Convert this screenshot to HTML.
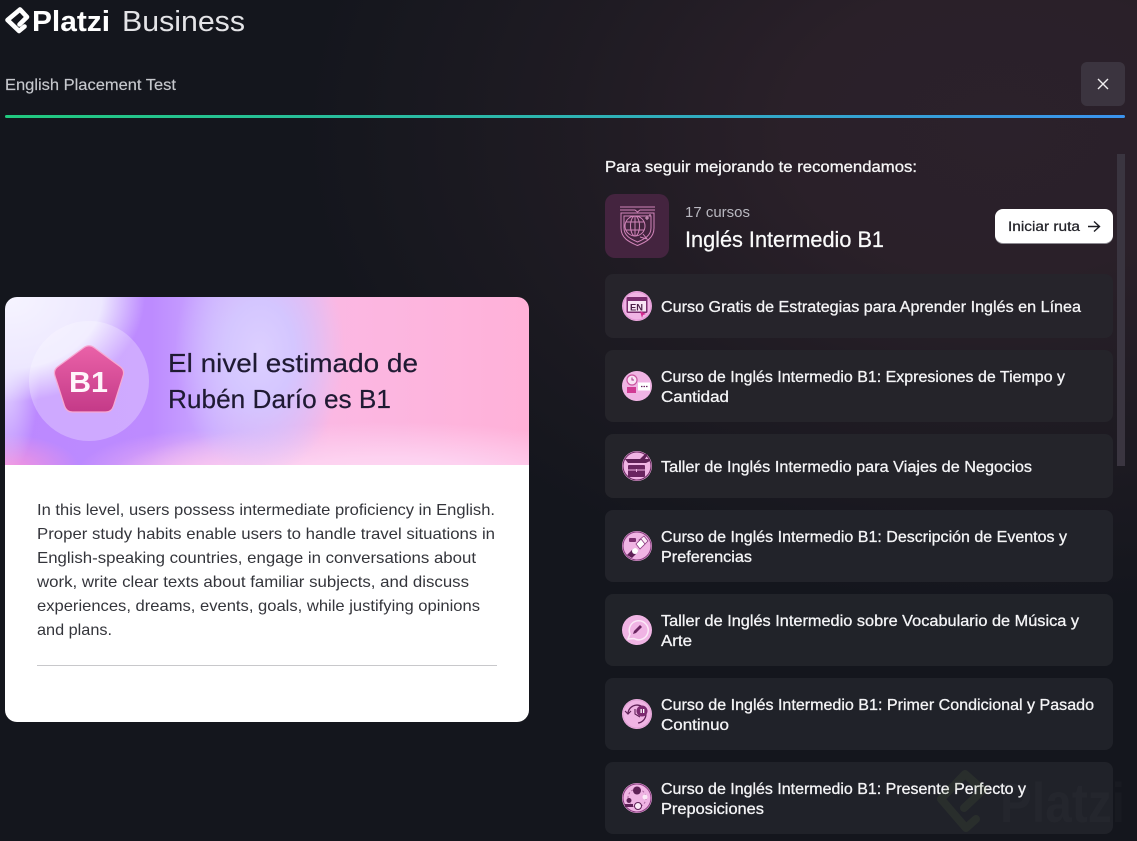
<!DOCTYPE html>
<html lang="es"><head><meta charset="utf-8"><title>English Placement Test</title>
<style>
html,body{margin:0;padding:0;width:1137px;height:841px;overflow:hidden;background:#14161d}
#bg{position:absolute;inset:0;background:radial-gradient(ellipse 700px 480px at 1000px 130px,#2b212b 0%,#2a2029 30%,rgba(35,29,37,.75) 60%,rgba(20,22,29,0) 100%),#14161d}
.b{position:absolute;box-sizing:border-box}
.c{left:605px;width:508px;border-radius:8px;background:#23242a}
#hd{left:5px;top:297px;width:524px;height:168px;border-radius:12px 12px 0 0;overflow:hidden;background:
radial-gradient(ellipse 135px 105px at 5px 0px,#f6f4ff 0%,#ede8ff 68%,rgba(237,232,255,0) 100%),
radial-gradient(ellipse 35px 110px at 0px 70px,#e6dcff 0%,rgba(230,220,255,0) 100%),
radial-gradient(ellipse 75px 35px at 0px 172px,#f895dc 0%,rgba(248,149,220,0) 100%),
radial-gradient(ellipse 85px 125px at 255px 55px,#dccfff 0%,#d4c6ff 40%,rgba(212,198,255,0) 100%),
radial-gradient(ellipse 280px 60px at 380px 185px,#fedaf3 0%,#fdd2f0 40%,rgba(253,210,240,0) 100%),
radial-gradient(ellipse 130px 45px at 200px 178px,#f6b8ee 0%,rgba(246,184,238,0) 100%),
linear-gradient(90deg,#bb88ff 0%,#bd8bff 28%,#cba9ff 40%,#fbb8e3 62%,#ffb1d8 100%)}
#card{left:5px;top:465px;width:524px;height:257px;background:#fff;border-radius:0 0 12px 12px}
svg{position:absolute;left:0;top:0}
text{font-family:"Liberation Sans",sans-serif}
.l{font-size:16px;fill:#f4f4f6;stroke:#f4f4f6;stroke-width:.3}
.p{font-size:16px;fill:#34353b}
.h{font-size:26px;fill:#1f1a33;stroke:#1f1a33;stroke-width:.2}
</style></head><body>
<div id="bg"></div>
<div class="b" style="left:5px;top:115px;width:1120px;height:3px;border-radius:2px;background:linear-gradient(90deg,#21c97f 0%,#2bb9a8 42%,#3b93ee 100%)"></div>
<div class="b" style="left:1081px;top:62px;width:44px;height:44px;border-radius:6px;background:#3b343f"></div>
<div class="b" style="left:1117px;top:154px;width:8px;height:312px;background:#3a3540"></div>
<div class="b" style="left:605px;top:194px;width:64px;height:64px;border-radius:10px;background:#44243f"></div>
<div class="b" style="left:995px;top:209px;width:118px;height:34px;border-radius:8px;background:#fff;box-shadow:0 1px 0 #8d8b92"></div>
<div class="b c" style="top:274px;height:64px;background:#26242b"></div>
<div class="b c" style="top:350px;height:72px;background:#25242a"></div>
<div class="b c" style="top:434px;height:64px;background:#24242a"></div>
<div class="b c" style="top:510px;height:72px;background:#22232a"></div>
<div class="b c" style="top:594px;height:72px;background:#212329"></div>
<div class="b c" style="top:678px;height:72px;background:#202229"></div>
<div class="b c" style="top:762px;height:72px;background:#202229"></div>
<div class="b" id="hd"></div>
<div class="b" id="card"></div>
<div class="b" style="left:37px;top:665px;width:460px;height:1px;background:#c8c8cb"></div>

<svg width="1137" height="841" viewBox="0 0 1137 841" xmlns="http://www.w3.org/2000/svg">
<!-- logo -->
<path d="M19.500 24.500 L27 17 L20 9.500 L7.500 20 L19 31 L24.500 26.500" fill="none" stroke="#fff" stroke-width="4.600" stroke-linejoin="round" stroke-linecap="round"/>
<text x="32" y="31" font-size="29" font-weight="700" fill="#fff" textLength="78" lengthAdjust="spacingAndGlyphs">Platzi</text>
<text x="122" y="31" font-size="29" fill="#e4e4e7" textLength="123" lengthAdjust="spacingAndGlyphs">Business</text>
<text x="5" y="90" font-size="16" fill="#c6c8cd" stroke="#c6c8cd" stroke-width=".15" textLength="171" lengthAdjust="spacingAndGlyphs">English Placement Test</text>
<path d="M1098 79 L1108 89 M1108 79 L1098 89" stroke="#f0eef0" stroke-width="1.400" fill="none"/>

<text x="605" y="172" font-size="16" fill="#f6f6f7" stroke="#f6f6f7" stroke-width=".3" textLength="312" lengthAdjust="spacingAndGlyphs">Para seguir mejorando te recomendamos:</text>
<text x="685" y="217" font-size="14.500" fill="#b9b8c0" textLength="65" lengthAdjust="spacingAndGlyphs">17 cursos</text>
<text x="685" y="247" font-size="22" fill="#fafafa" stroke="#fafafa" stroke-width=".25" textLength="199" lengthAdjust="spacingAndGlyphs">Inglés Intermedio B1</text>
<text x="1008" y="231" font-size="13.500" fill="#24242a" stroke="#24242a" stroke-width=".25" textLength="72" lengthAdjust="spacingAndGlyphs">Iniciar ruta</text>
<path d="M1088 226.500 H1099 M1094 221.500 L1099.500 226.500 L1094 231.500" stroke="#1c1c22" stroke-width="1.400" fill="none"/>

<!-- route icon -->
<g fill="none" stroke="#d084b8" stroke-width="1">
<path d="M620 207 H655 M620 210 H635 L637.500 212 L640 210 H655"/>
<path d="M621 213 H654 V228 C654 238 646 242 637.500 245.500 C629 242 621 238 621 228 Z"/>
<path d="M624 216 H651 V228 C651 236 644 239 637.500 242 C631 239 624 236 624 228 Z"/>
<circle cx="635" cy="226" r="10"/><ellipse cx="635" cy="226" rx="4.500" ry="10"/>
<path d="M625.500 222 H644.500 M625.500 230 H644.500 M635 216 V236"/>
<path d="M643 234 L647 239 L640 237"/>
<path d="M647 216 V220 M645 218 H649 M650 214 V216" stroke="#e0a4cc"/>
</g>

<!-- list text -->
<text class="l" x="661" y="312" textLength="420" lengthAdjust="spacingAndGlyphs">Curso Gratis de Estrategias para Aprender Inglés en Línea</text>
<text class="l" x="661" y="382" textLength="404" lengthAdjust="spacingAndGlyphs">Curso de Inglés Intermedio B1: Expresiones de Tiempo y</text>
<text class="l" x="661" y="402" textLength="68" lengthAdjust="spacingAndGlyphs">Cantidad</text>
<text class="l" x="661" y="472" textLength="371" lengthAdjust="spacingAndGlyphs">Taller de Inglés Intermedio para Viajes de Negocios</text>
<text class="l" x="661" y="542" textLength="406" lengthAdjust="spacingAndGlyphs">Curso de Inglés Intermedio B1: Descripción de Eventos y</text>
<text class="l" x="661" y="562" textLength="91" lengthAdjust="spacingAndGlyphs">Preferencias</text>
<text class="l" x="661" y="626" textLength="418" lengthAdjust="spacingAndGlyphs">Taller de Inglés Intermedio sobre Vocabulario de Música y</text>
<text class="l" x="661" y="646" textLength="31" lengthAdjust="spacingAndGlyphs">Arte</text>
<text class="l" x="661" y="710" textLength="433" lengthAdjust="spacingAndGlyphs">Curso de Inglés Intermedio B1: Primer Condicional y Pasado</text>
<text class="l" x="661" y="730" textLength="68" lengthAdjust="spacingAndGlyphs">Continuo</text>
<text class="l" x="661" y="794" textLength="365" lengthAdjust="spacingAndGlyphs">Curso de Inglés Intermedio B1: Presente Perfecto y</text>
<text class="l" x="661" y="814" textLength="103" lengthAdjust="spacingAndGlyphs">Preposiciones</text>

<!-- icon 1 EN -->
<g transform="translate(637 306)"><circle r="15" fill="#f0b4e4"/><circle r="14" fill="none" stroke="#e596d6" stroke-width="1"/>
<rect x="-10.500" y="-9" width="21" height="16" rx="1.500" fill="#7a2d6e"/><rect x="-9" y="-5" width="18" height="10.500" fill="#f8e4f4"/>
<text x="-7" y="4.500" font-size="9" font-weight="700" fill="#4c2048" textLength="13" lengthAdjust="spacingAndGlyphs">EN</text>
<path d="M3 5 L9 8 L6 9 L5 12 Z" fill="#d3288e"/></g>
<!-- icon 2 -->
<g transform="translate(637 386)"><circle r="15" fill="#f0b4e4"/>
<circle cx="-5" cy="-6" r="5" fill="#f9e3f5" stroke="#c9549f" stroke-width="1.200"/><path d="M-5 -8.500 V-6 H-3" stroke="#a33a88" fill="none"/>
<rect x="-10" y="1" width="9" height="6" fill="#d13b94"/><rect x="1" y="-3.500" width="12" height="8" fill="#fff"/>
<path d="M4 .5 H5.500 M6.500 .5 H8 M9 .5 H10.500" stroke="#6a2560" stroke-width="1.200"/></g>
<!-- icon 3 -->
<g transform="translate(637 466)"><circle r="15" fill="#f0b4e4"/><circle r="14" fill="none" stroke="#6a2560" stroke-width="1"/>
<path d="M-12 -7 H3 L8 -12 H11 L8 -7 H13 V-5 L9 -3 H-9 Z" fill="#5f2157"/>
<rect x="-9" y="-1" width="17" height="12" rx="1" fill="#6a2560"/><path d="M-9 4 H8 M-.5 3 V6" stroke="#f0b4e4" stroke-width="1"/></g>
<!-- icon 4 -->
<g transform="translate(637 546)"><circle r="15" fill="#f0b4e4"/><circle r="14" fill="none" stroke="#8a3a80" stroke-width="1"/>
<rect x="-8" y="-8" width="7" height="4" rx="1" fill="#7a2d6e"/>
<path d="M-10 9 L-3 2 L1 6 L-5 12 Z" fill="#5f2157"/><circle cx="-2" cy="5" r="3" fill="#fff"/>
<path d="M2 -6 L7 -10 L11 -5 L6 0 Z" fill="#fbe8f6" stroke="#8a3a80" stroke-width=".8"/><path d="M-1 -2 L4 -7 L8 -2 L3 3 Z" fill="#fff" stroke="#8a3a80" stroke-width=".8"/></g>
<!-- icon 5 -->
<g transform="translate(637 630)"><circle r="15" fill="#f0b4e4"/>
<path d="M-9 9 L-7 4 A9.500 9.500 0 1 1 -3 8.500 Z" fill="#f0b4e4" stroke="#fbe9f7" stroke-width="1.500"/>
<path d="M-4 4 L-3 1 L3 -5 L5 -3 L-1 3 Z" fill="#6a2560"/></g>
<!-- icon 6 -->
<g transform="translate(637 714)"><circle r="15" fill="#f0b4e4"/><circle r="14" fill="none" stroke="#e0a0d4" stroke-width="1"/>
<path d="M-9 -1 A9 9 0 1 1 1 9" fill="none" stroke="#5f2157" stroke-width="1.300"/><path d="M-12 -3 L-9 0 L-6 -3" fill="none" stroke="#5f2157" stroke-width="1.200"/>
<path d="M-2 -5 V0 L3 3" fill="none" stroke="#5f2157" stroke-width="1.100"/>
<circle cx="5" cy="-3" r="5.500" fill="#7c2a70"/><rect x="3.500" y="-5" width="1.300" height="4" fill="#fff"/><rect x="6" y="-5" width="1.300" height="4" fill="#fff"/></g>
<!-- icon 7 -->
<g transform="translate(637 798)"><circle r="15" fill="#f0b4e4"/><circle r="14" fill="none" stroke="#8a3a80" stroke-width="1"/>
<circle r="9" fill="none" stroke="#a9669e" stroke-width="1" stroke-dasharray="2 2"/>
<circle cy="-7.500" r="4" fill="#5f2157"/><circle cx="-8" cy="2.500" r="2.500" fill="#5f2157"/><path d="M-12 9 H-4 V6 H-12 Z" fill="#5f2157"/>
<circle cx="1" cy="8" r="3.500" fill="#fbe9f7" stroke="#5f2157" stroke-width="1"/><circle cx="8" cy="-1" r="2.500" fill="#fbe9f7"/></g>

<!-- left card -->
<circle cx="89" cy="381" r="60" fill="#fff" fill-opacity=".27"/>
<defs><linearGradient id="pg" x1="0" y1="0" x2="0" y2="1"><stop offset="0" stop-color="#ea62a8"/><stop offset="1" stop-color="#c43a88"/></linearGradient></defs>
<path d="M84 347.500 Q89 344 94 347.500 L120 366.500 Q125 370 123 376 L113.500 406 Q111.500 412 105.500 412 H72.500 Q66.500 412 64.500 406 L55 376 Q53 370 58 366.500 Z" fill="url(#pg)" stroke="#f7a9d2" stroke-width="1.200" stroke-linejoin="round"/>
<text x="69" y="392" font-size="29" font-weight="700" fill="#fff5fb" textLength="39" lengthAdjust="spacingAndGlyphs">B1</text>
<text class="h" x="168" y="372" textLength="250" lengthAdjust="spacingAndGlyphs">El nivel estimado de</text>
<text class="h" x="168" y="408" textLength="223" lengthAdjust="spacingAndGlyphs">Rubén Darío es B1</text>
<text class="p" x="37" y="515" textLength="458" lengthAdjust="spacingAndGlyphs">In this level, users possess intermediate proficiency in English.</text>
<text class="p" x="37" y="539" textLength="458" lengthAdjust="spacingAndGlyphs">Proper study habits enable users to handle travel situations in</text>
<text class="p" x="37" y="563" textLength="439" lengthAdjust="spacingAndGlyphs">English-speaking countries, engage in conversations about</text>
<text class="p" x="37" y="587" textLength="432" lengthAdjust="spacingAndGlyphs">work, write clear texts about familiar subjects, and discuss</text>
<text class="p" x="37" y="611" textLength="443" lengthAdjust="spacingAndGlyphs">experiences, dreams, events, goals, while justifying opinions</text>
<text class="p" x="37" y="635" textLength="75" lengthAdjust="spacingAndGlyphs">and plans.</text>

<!-- watermark -->
<path d="M964 808 L983 790 L965 774 L941 799 L966 828 L976 819" fill="none" stroke="#5f7040" stroke-opacity=".16" stroke-width="8" stroke-linejoin="round" stroke-linecap="round"/>
<text x="1000" y="822" font-size="56" font-weight="700" fill="#fff" fill-opacity=".018" textLength="125" lengthAdjust="spacingAndGlyphs">Platzi</text>
</svg>
</body></html>
